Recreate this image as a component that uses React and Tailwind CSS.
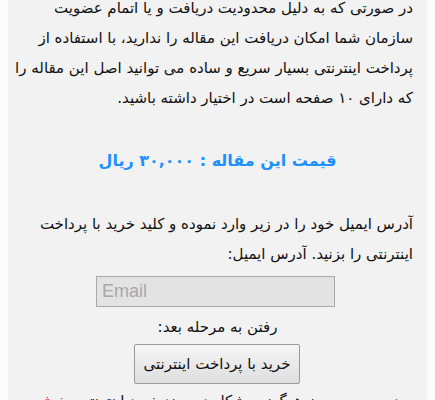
export default function App() {
  return (
    <div className="h-[400px] overflow-hidden bg-[#fbfbfb] px-2" dir="rtl">
      <div
        className="-mt-[7px] bg-[#f2f2f2] px-[14px] pb-10 text-[#111]"
        style={{ fontFamily: '"DejaVu Sans", sans-serif' }}
      >
        <div className="whitespace-nowrap text-[15px] leading-[30px]">
          <p>در صورتی که به دلیل محدودیت دریافت و یا اتمام عضویت</p>
          <p>سازمان شما امکان دریافت این مقاله را ندارید، با استفاده از</p>
          <p className="tracking-[-0.2px]">پرداخت اینترنتی بسیار سریع و ساده می توانید اصل این مقاله را</p>
          <p>که دارای ۱۰ صفحه است در اختیار داشته باشید.</p>
        </div>

        <h2 className="mt-[33px] text-center text-[16px] font-bold leading-[30px] text-[#1e90ff]">
          قیمت این مقاله : ۳۰,۰۰۰ ریال
        </h2>

        <div className="mt-[33px] whitespace-nowrap text-[15px] leading-[30px]">
          <p>آدرس ایمیل خود را در زیر وارد نموده و کلید خرید با پرداخت</p>
          <p>اینترنتی را بزنید. آدرس ایمیل:</p>
        </div>

        <div className="mt-[7px] flex justify-center">
          <input
            type="email"
            dir="ltr"
            placeholder="Email"
            className="ml-[-4px] h-[31px] w-[239px] border border-[#a9a9a9] bg-[#e3e3e3] px-[5px] text-[18px] text-[#333] outline-none placeholder:text-[#a8a8a8]"
            style={{ fontFamily: '"Liberation Sans", sans-serif' }}
          />
        </div>

        <p className="mt-[5px] text-center text-[15px] leading-[30px]">رفتن به مرحله بعد:</p>

        <div className="mt-[2px] flex justify-center">
          <button className="ml-[-1px] h-[40px] w-[166px] rounded-[2px] border border-[#9a9a9a] bg-gradient-to-b from-[#f6f6f6] to-[#dedede] text-[15px] text-[#111]">
            خرید با پرداخت اینترنتی
          </button>
        </div>

        <p className="mt-[2px] whitespace-nowrap text-center text-[15px] leading-[30px]">
          در صورت بروز هرگونه مشکل در روند خرید اینترنتی{" "}
          <span className="font-bold text-[#e8102a]">بخش</span>
        </p>
      </div>
    </div>
  );
}
